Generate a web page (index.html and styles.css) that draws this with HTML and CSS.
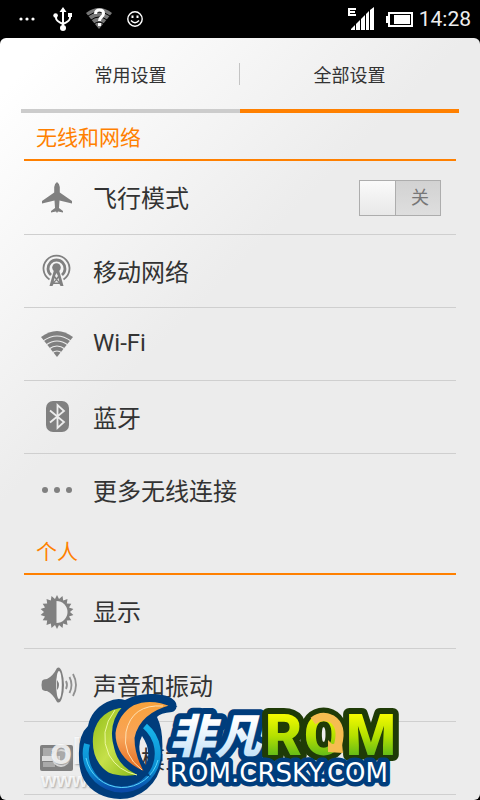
FILE: index.html
```html
<!DOCTYPE html>
<html lang="zh-CN">
<head>
	<meta charset="utf-8">
	<meta name="viewport" content="width=device-width, initial-scale=1">
	<title>全部设置</title>
	<link rel="stylesheet" href="styles.css">
</head>
<body>
	<header class="status-bar">
		<svg class="st-dots" width="16" height="24" viewBox="0 0 16 24" fill="#fff"><circle cx="2" cy="12" r="1.6"/><circle cx="8" cy="12" r="1.6"/><circle cx="14" cy="12" r="1.6"/></svg>
		<svg class="st-usb" width="20" height="24" viewBox="0 0 20 24" fill="none" stroke="#fff" stroke-width="2">
			<path d="M10 4v16M3 9v2q0 3 7 6M17 9v2q0 3-7 6"/>
			<path d="M10 0l3.500 5h-7zM15 6h4v4h-4z" fill="#fff" stroke="none"/>
			<circle cx="2.600" cy="8.500" r="2.300" fill="#fff" stroke="none"/><circle cx="10" cy="21" r="3" fill="#fff" stroke="none"/>
		</svg>
		<svg class="st-wifi" width="26" height="24" viewBox="0 0 26 24">
			<path d="M0 6Q13-4 26 6L13 22z" fill="#777"/>
			<path d="M2 9q11-8 22 0M5 13q8-6 16 0M8 17q5-4 10 0" fill="none" stroke="#000" stroke-width="1"/>
			<path d="M9.500 7q0-4 4-4t4 3.500q0 2-2 3.500t-2 4M13.500 16v3" fill="none" stroke="#fff" stroke-width="3"/>
		</svg>
		<svg class="st-face" width="16" height="24" viewBox="0 0 16 24" fill="none" stroke="#fff" stroke-width="1.400">
			<circle cx="8" cy="12" r="7.200"/><path d="M4 13.500q4 4.500 8 0"/><path d="M5.500 8.500v2.500M10.500 8.500v2.500" stroke-width="2"/>
		</svg>
		<span class="spacer"></span>
		<svg class="st-signal" width="27" height="24" viewBox="0 0 27 24">
			<path d="M8 2H1v6h7M1 5h6" fill="none" stroke="#fff" stroke-width="2"/>
			<path d="M3 23v-1l4-4v5zM8 23v-6l4-4v10zM13 23V12l4-4v15zM18 23V7l3-3v19zM22 23V3l4-3v23z" fill="#fff"/>
		</svg>
		<svg class="st-battery" width="29" height="24" viewBox="0 0 29 24"><path d="M3 5h25v15H3v-4H1V9h2z" fill="#fff"/><path d="M5 7h21v11H5z" fill="#000"/><path d="M9 8h16v9H9z" fill="#fff"/></svg>
		<time class="clock">14:28</time>
	</header>

	<main class="panel">
		<nav class="tabs">
			<button class="tab" type="button">常用设置</button>
			<button class="tab active" type="button">全部设置</button>
		</nav>

		<section class="group">
			<h2>无线和网络</h2>
			<ul>
				<li class="row">
					<svg class="icon" viewBox="0 0 36 36"><path d="M18 2q2.800 2 2.800 5v5.500L33 21v2.500l-12.500-3L20 28l4 3v1.500l-5-1-1 1.500-1-1.500-5 1V31l4-3-.5-7.500-12.500 3V21l12.200-8.500V7q0-3 2.800-5z"/></svg>
					<label class="name" for="airplane">飞行模式</label>
					<span class="switch">
						<input type="checkbox" id="airplane">
						<span class="knob"></span>
						<span class="state">关</span>
					</span>
				</li>
				<li>
					<a class="row" href="#">
						<svg class="icon" viewBox="0 0 36 36">
							<g fill="none" stroke="#808080"><path d="M10.500 26.500A13 13 0 1 1 24.500 26.500" stroke-width="1.800"/><path d="M12 22A8.500 8.500 0 1 1 23 22" stroke-width="2.800"/></g>
							<circle cx="17.500" cy="14.500" r="4.300"/>
							<path d="M15 17h5l4.500 16h-3l-1-2h-6l-1 2h-3z"/>
							<path d="M17.500 20l1.500 3-1.500 2-1.500-2zM15.500 25l1.200 1.500-2 2zM19.500 25l.8 3.500-2-2zM17.500 27.500l2 2h-4z" fill="#eee"/>
						</svg>
						<span class="name">移动网络</span>
					</a>
				</li>
				<li>
					<a class="row" href="#">
						<svg class="icon" viewBox="0 0 36 36">
							<path d="M2 11Q18-1 34 11L18 31z"/>
							<path d="M4 15q14-10 28 0M7 19q11-8 22 0M10 23q8-6 16 0M13 27q5-4 10 0" fill="none" stroke="#ececec" stroke-width="1.200"/>
						</svg>
						<span class="name">Wi-Fi</span>
					</a>
				</li>
				<li>
					<a class="row" href="#">
						<svg class="icon" viewBox="0 0 36 36">
							<rect x="7" y="2" width="23" height="31" rx="7"/>
							<path d="M11 11.500l14 11.500-6.500 6V6l6.500 6-14 11.500" fill="none" stroke="#ececec" stroke-width="1.800"/>
						</svg>
						<span class="name">蓝牙</span>
					</a>
				</li>
				<li>
					<a class="row" href="#">
						<svg class="icon" viewBox="0 0 36 36"><circle cx="6" cy="18" r="3"/><circle cx="18" cy="18" r="3"/><circle cx="30" cy="18" r="3"/></svg>
						<span class="name">更多无线连接</span>
					</a>
				</li>
			</ul>
		</section>

		<section class="group personal">
			<h2>个人</h2>
			<ul>
				<li>
					<a class="row" href="#">
						<svg class="icon" viewBox="0 0 36 36">
							<path d="M18 1l2 4 3.500-3 .7 4.500L28.500 5l-.7 4.500 4.500.2-2.300 3.900 4.400 1.500L31 18l3.400 3-4.400 1.400 2.300 3.900-4.500.2.700 4.500-4.300-1.500-.7 4.500L20 31l-2 4-2-4-3.500 3-.7-4.500L7.500 31l.7-4.500-4.500-.2L6 22.400 1.600 21 5 18l-3.400-2.900L6 13.600 3.700 9.700l4.500-.2L7.500 5l4.300 1.500.7-4.500L16 5z"/>
							<path d="M17.500 7A11 11 0 0 1 17.500 29z" fill="#ececec"/>
						</svg>
						<span class="name">显示</span>
					</a>
				</li>
				<li>
					<a class="row" href="#">
						<svg class="icon" viewBox="0 0 36 36">
							<path d="M3 14q1-2 5-2 6-3 10-11 3-2 5 4 2 6 2 13t-2 13q-2 6-5 4-4-8-10-11-4 0-5-2-1-4 0-8z"/>
							<ellipse cx="20" cy="18" rx="2.800" ry="14" fill="#f4f4f4"/>
							<path d="M18 13q4 5 0 10z"/>
							<path d="M27 14q2 4 0 8M30.500 10q4 8 0 16M34 7q6 11 0 22" fill="none" stroke="#909090" stroke-width="1.800"/>
						</svg>
						<span class="name">声音和振动</span>
					</a>
				</li>
				<li>
					<a class="row" href="#">
						<svg class="icon" viewBox="0 0 36 36">
							<rect x="1" y="5" width="33" height="26" rx="2"/>
							<path d="M4 8h27v3H12v3h14v3H4zM4 22h12v5H4z" fill="#aaa"/>
							<circle cx="22" cy="18" r="8" fill="#aaa" stroke="#ddd" stroke-width="2"/>
							<path d="M3 16h18v5H3z" fill="#ddd"/>
						</svg>
						<span class="name">情景模式</span>
					</a>
				</li>
			</ul>
		</section>
	</main>

	<!-- site badge, lies over the end of the list -->
	<svg class="badge" width="380" height="108" viewBox="30 692 380 108">
		<defs>
			<linearGradient id="green" x1="0" y1="0" x2="1" y2="1"><stop offset="0" stop-color="#8dbb12"/><stop offset=".5" stop-color="#c6e04a"/><stop offset="1" stop-color="#7fb410"/></linearGradient>
			<linearGradient id="orange" x1="0" y1="0" x2="0" y2="1"><stop offset="0" stop-color="#f9a23a"/><stop offset=".5" stop-color="#f8a458"/><stop offset="1" stop-color="#e2661a"/></linearGradient>
			<linearGradient id="ring" x1="0" y1="0" x2="0" y2="1"><stop offset="0" stop-color="#18b4ea"/><stop offset=".7" stop-color="#0a8bd0"/><stop offset="1" stop-color="#0a4aa8"/></linearGradient>
			<linearGradient id="ice" x1="0" y1="0" x2="0" y2="1"><stop offset=".3" stop-color="#fff"/><stop offset="1" stop-color="#b5dcf7"/></linearGradient>
			<linearGradient id="lime" gradientUnits="userSpaceOnUse" x1="0" y1="715" x2="0" y2="757"><stop offset="0" stop-color="#f2fa00"/><stop offset=".5" stop-color="#b4e000"/><stop offset="1" stop-color="#5db81a"/></linearGradient>
		</defs>
		<g class="faint"><text class="faint-big" x="50" y="764">ol</text><text class="faint-www" x="41" y="787">www.</text></g>
		<path fill="#003d7c" fill-rule="evenodd" d="M79 757q-1-22 9-31 3-16 19-24 10-5 18-2 12-7 30-6 17 1 21 9 2 7-4 9-12 1-15 5 7 14 5 40-1 20-15 32-12 10-27 10-25-1-36-19-5-9-5-23zM142 736q-4 7-2 17 2 8 6 12 6-15-4-29z"/>
		<path fill="none" stroke="url(#ring)" stroke-width="6" d="M87 744A36 36 0 1 0 145 726"/>
		<path fill="none" stroke="#5ad6fa" d="M86 758A37 37 0 0 0 158 760"/>
		<path fill="url(#green)" stroke="#003d7c" stroke-width="3" d="M125 706Q98 708 92 733 88 761 108 774 123 780 142 775 120 767 116 749 108 724 125 706z"/>
		<path fill="none" stroke="#ecf8a0" stroke-width="1" d="M115 710Q98 732 109 755 118 771 137 775"/>
		<path fill="url(#orange)" stroke="#003d7c" stroke-width="3" d="M173 706Q151 696 133 704 117 713 114 733 114 761 147 774 136 756 136 738 141 714 173 706z"/>
		<path fill="none" stroke="#ffe0b0" stroke-width="1" d="M163 706Q132 704 126 732 122 755 142 770"/>
		<text class="badge-name" x="169" y="753">非凡</text>
		<text class="badge-rom" x="265 304 346" y="755">ROM</text>
		<path fill="none" stroke="#f6bd50" stroke-width="8" d="M313 721Q322 714 332 719 343 726 338 745"/>
		<path fill="#f6bd50" d="M328 740l4 4 10-1 1 10-15-1z"/>
		<text class="badge-url" x="170" y="782">ROM.CRSKY.COM</text>
	</svg>
</body>
</html>
```

FILE: styles.css
```css
* { box-sizing: border-box; }

body {
	display: flex;
	flex-direction: column;
	position: relative;
	height: 100vh;
	margin: 0;
	overflow: hidden;
	background: #000;
	color: #333;
	font-family: Roboto, "Noto Sans CJK SC", sans-serif;
	font-weight: 400;
}

h2, ul { margin: 0; padding: 0; }
ul { list-style: none; }

/* status bar */
.status-bar {
	display: flex;
	align-items: center;
	flex: none;
	height: 38px;
	padding: 0 9px 0 19px;
}
.st-usb { margin-left: 18px; }
.st-wifi { margin-left: 13px; }
.st-face { margin-left: 15px; }
.spacer { flex: 1; }
.st-battery { margin: 0 5px 0 10px; }
.clock {
	color: #eee;
	font-size: 21px;
	line-height: 40px;
}

/* panel */
.panel {
	flex: 1;
	border-radius: 6px;
	background: linear-gradient(135deg, #fff 40px, #ececec 330px);
	min-height: 0;
	overflow: hidden;
}

.tabs {
	display: flex;
	margin: 0 21px;
}
.tab {
	display: flex;
	flex: 1;
	align-items: center;
	justify-content: center;
	height: 75px;
	padding: 0;
	border: 0;
	border-bottom: 4px solid #ccc;
	background: none;
	color: #333;
	font: inherit;
	font-size: 18px;
}
.tab.active { border-bottom-color: #ff8000; }
.tab:first-child { position: relative; }
.tab:first-child::after {
	content: "";
	position: absolute;
	right: 0;
	top: 25px;
	width: 1px;
	height: 22px;
	background: #c4c4c4;
}

.group { margin: 0 24px; }
.personal { margin-top: 1px; }
.personal ul { border-bottom: 1px solid #cfcfcf; }
.group h2 {
	height: 48px;
	padding-left: 12px;
	border-bottom: 2px solid #ff8000;
	color: #ff8000;
	font-size: 21px;
	font-weight: 400;
	line-height: 50px;
}

.row {
	display: flex;
	align-items: center;
	gap: 18px;
	height: 73px;
	padding: 0 15px;
	color: inherit;
	font-size: 24px;
	text-decoration: none;
}
li + li .row { border-top: 1px solid #cfcfcf; }
.name { padding-bottom: 2px; }
.icon {
	flex: none;
	width: 36px;
	height: 36px;
	overflow: visible;
	fill: #808080;
}

/* on/off switch */
.switch {
	display: flex;
	position: relative;
	width: 82px;
	height: 36px;
	margin-left: auto;
	border: 1px solid #adadad;
	background: linear-gradient(#d2d2d2, #dedede);
}
.switch input {
	position: absolute;
	inset: 0;
	width: 100%;
	height: 100%;
	margin: 0;
	opacity: 0;
}
.knob {
	width: 36px;
	border-right: 1px solid #adadad;
	background: linear-gradient(#fafafa, #e8e8e8);
}
.state {
	flex: 1;
	padding-left: 4px;
	color: #777;
	font-size: 18px;
	line-height: 34px;
	text-align: center;
}

/* badge */
.badge {
	position: absolute;
	left: 30px;
	bottom: 0;
	pointer-events: none;
}
.faint {
	fill: #fff;
	fill-opacity: .8;
	font-family: "Liberation Sans", sans-serif;
	font-weight: 700;
	text-shadow: 1px 1px 2px #999;
}
.faint-big { font-size: 36px; }
.faint-www { font-size: 20px; }
.badge-name {
	fill: url(#ice);
	stroke: #003d7c;
	stroke-width: 12px;
	stroke-linejoin: round;
	paint-order: stroke;
	font-family: "Noto Sans CJK SC", sans-serif;
	font-size: 46px;
	font-style: italic;
	font-weight: 900;
}
.badge-url {
	fill: #fff;
	stroke: #003d7c;
	stroke-width: 9px;
	stroke-linejoin: round;
	paint-order: stroke;
	font-family: "DejaVu Sans", sans-serif;
	font-size: 26px;
	font-weight: 400;
}
.badge-rom {
	fill: url(#lime);
	stroke: #1f3b07;
	stroke-width: 12px;
	stroke-linejoin: round;
	paint-order: stroke;
	font-family: Roboto, sans-serif;
	font-size: 57px;
	font-weight: 900;
}
```
